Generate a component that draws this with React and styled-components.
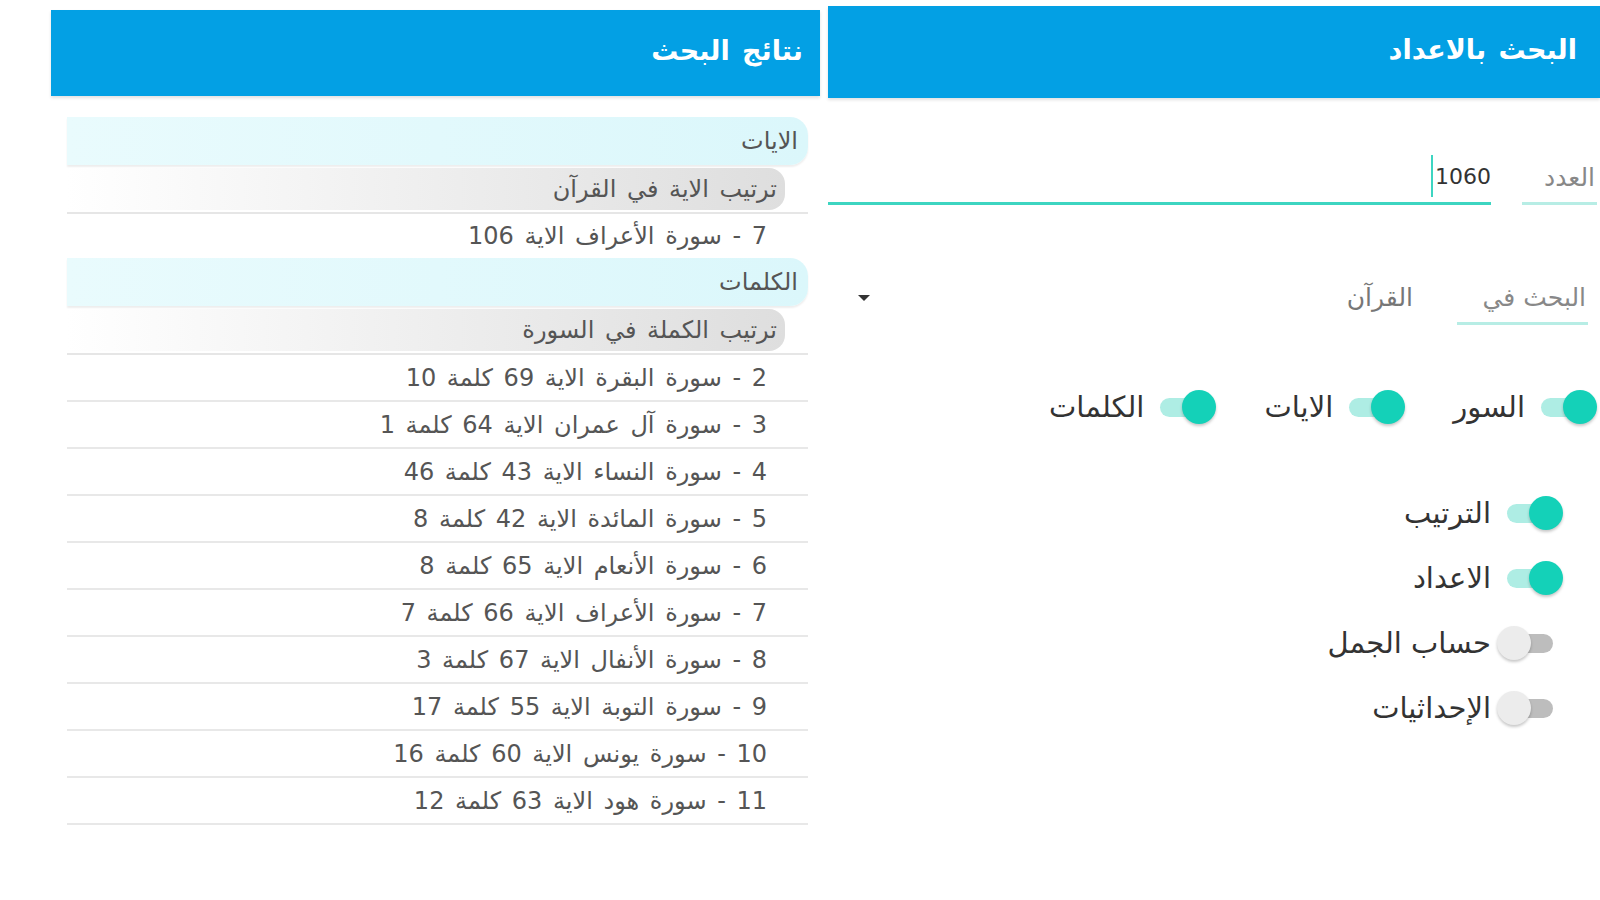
import React from 'react';
import styled, { createGlobalStyle } from 'styled-components';

const GlobalStyle = createGlobalStyle`
  html, body {
    margin: 0;
    padding: 0;
    background: #fff;
  }
  body {
    font-family: "DejaVu Sans", "Noto Sans", sans-serif;
  }
`;

const Page = styled.div`
  direction: rtl;
  display: flex;
  align-items: flex-start;
  gap: 8px;
  padding-left: 51px;
  height: 900px;
  overflow: hidden;
`;

const Panel = styled.section`
  width: ${p => p.$width}px;
  display: flex;
  flex-direction: column;
`;

const Header = styled.header`
  height: ${p => p.$height}px;
  margin-top: ${p => p.$top}px;
  padding-right: ${p => p.$pad}px;
  padding-bottom: 6px;
  box-sizing: border-box;
  background: #03a0e4;
  color: #fff;
  display: flex;
  align-items: center;
  font-size: 27px;
  font-weight: bold;
  word-spacing: 3px;
  box-shadow: 0 2px 3px rgba(0, 0, 0, 0.12);
`;

/* ---------- results list ---------- */

const ResultList = styled.div`
  padding: 21px 12px 0 16px;
  display: flex;
  flex-direction: column;
  font-size: 24px;
  word-spacing: 3px;
  color: #555;
`;

const SectionBand = styled.div`
  height: 48px;
  display: flex;
  align-items: center;
  padding-right: 10px;
  background: linear-gradient(to right, #e9fbfd, #dbf7fb);
  border-radius: 0 18px 18px 0;
  box-shadow: 0 2px 2px rgba(0, 0, 0, 0.07);
`;

const SortRow = styled.div`
  margin-top: 3px;
  padding-bottom: 2px;
  border-bottom: 2px solid #e6e6e6;
`;

const SortBand = styled.div`
  height: 42px;
  margin-right: 23px;
  display: flex;
  align-items: center;
  padding-right: 8px;
  background: linear-gradient(to right, #ffffff, #dedede);
  border-radius: 0 16px 16px 0;
`;

const ResultItem = styled.div`
  height: ${p => (p.$plain ? 44 : 45)}px;
  display: flex;
  align-items: center;
  padding-right: 41px;
  border-bottom: ${p => (p.$plain ? 'none' : '2px solid #e8e8e8')};
`;

/* ---------- search form ---------- */

const FieldRow = styled.div`
  display: flex;
  align-items: flex-end;
  gap: ${p => p.$gap}px;
  height: ${p => p.$height}px;
  margin-top: ${p => p.$top}px;
  padding-right: ${p => p.$right}px;
  padding-left: ${p => p.$left || 0}px;
`;

const FieldLabel = styled.div`
  min-width: ${p => p.$min}px;
  box-sizing: border-box;
  font-size: 25px;
  line-height: 30px;
  color: #888;
  padding: 0 2px 9px;
  border-bottom: 3px solid #b7ede5;
  white-space: nowrap;
`;

const InputBox = styled.div`
  flex: 1;
  height: 52px;
  display: flex;
  align-items: center;
  border-bottom: 3px solid #3dd5c1;
  font-size: 22px;
  color: #333;
`;

const Caret = styled.span`
  width: 2px;
  height: 42px;
  margin-right: 2px;
  background: #3dd5c1;
`;

const Spinner = styled.div`
  flex: 1;
  display: flex;
  align-items: center;
  justify-content: space-between;
  padding-bottom: 12px;
  font-size: 25px;
  line-height: 30px;
  color: #777;
`;

const Arrow = styled.span`
  width: 0;
  height: 0;
  border-left: 6px solid transparent;
  border-right: 6px solid transparent;
  border-top: 6px solid #333;
`;

const ToggleLine = styled.div`
  display: flex;
  gap: 48px;
  margin-top: 65px;
  padding-right: 3px;
`;

const ToggleStack = styled.div`
  display: flex;
  flex-direction: column;
  gap: 31px;
  margin-top: 72px;
  padding-right: 37px;
`;

const Toggle = styled.label`
  display: flex;
  align-items: center;
  gap: 6px;
  height: 34px;
  font-size: 29px;
  color: #333;
  white-space: nowrap;
`;

const SwitchBox = styled.span`
  position: relative;
  width: 66px;
  height: 34px;
  flex: none;
`;

const Track = styled.span`
  position: absolute;
  left: 10px;
  right: 10px;
  top: 8px;
  height: 19px;
  border-radius: 10px;
  background: ${p => (p.$on ? '#aeede4' : '#bdbdbd')};
`;

const Thumb = styled.span`
  position: absolute;
  top: 0;
  ${p => (p.$on ? 'right: 0;' : 'left: 0;')}
  width: 34px;
  height: 34px;
  border-radius: 50%;
  background: ${p => (p.$on ? '#14d1b8' : '#ececec')};
  box-shadow: 0 2px 3px rgba(0, 0, 0, 0.22);
`;

const Switch = ({ on }) => (
  <SwitchBox>
    <Track $on={on} />
    <Thumb $on={on} />
  </SwitchBox>
);

const wordResults = [
  '2 - سورة البقرة الاية 69 كلمة 10',
  '3 - سورة آل عمران الاية 64 كلمة 1',
  '4 - سورة النساء الاية 43 كلمة 46',
  '5 - سورة المائدة الاية 42 كلمة 8',
  '6 - سورة الأنعام الاية 65 كلمة 8',
  '7 - سورة الأعراف الاية 66 كلمة 7',
  '8 - سورة الأنفال الاية 67 كلمة 3',
  '9 - سورة التوبة الاية 55 كلمة 17',
  '10 - سورة يونس الاية 60 كلمة 16',
  '11 - سورة هود الاية 63 كلمة 12',
];

const scopes = [
  { label: 'السور', on: true },
  { label: 'الايات', on: true },
  { label: 'الكلمات', on: true },
];

const options = [
  { label: 'الترتيب', on: true },
  { label: 'الاعداد', on: true },
  { label: 'حساب الجمل', on: false },
  { label: 'الإحداثيات', on: false },
];

export default function App() {
  return (
    <>
      <GlobalStyle />
      <Page>
        <Panel $width={772}>
          <Header $height={92} $top={6} $pad={23}>البحث بالاعداد</Header>

          <FieldRow $gap={31} $height={55} $top={52} $right={3}>
            <FieldLabel $min={75}>العدد</FieldLabel>
            <InputBox>
              1060
              <Caret />
            </InputBox>
          </FieldRow>

          <FieldRow $gap={44} $height={58} $top={62} $right={12} $left={30}>
            <FieldLabel $min={131}>البحث في</FieldLabel>
            <Spinner>
              القرآن
              <Arrow />
            </Spinner>
          </FieldRow>

          <ToggleLine>
            {scopes.map(s => (
              <Toggle key={s.label}>
                <Switch on={s.on} />
                {s.label}
              </Toggle>
            ))}
          </ToggleLine>

          <ToggleStack>
            {options.map(o => (
              <Toggle key={o.label}>
                <Switch on={o.on} />
                {o.label}
              </Toggle>
            ))}
          </ToggleStack>
        </Panel>

        <Panel $width={769}>
          <Header $height={86} $top={10} $pad={17}>نتائج البحث</Header>
          <ResultList>
            <SectionBand>الايات</SectionBand>
            <SortRow>
              <SortBand>ترتيب الاية في القرآن</SortBand>
            </SortRow>
            <ResultItem $plain>7 - سورة الأعراف الاية 106</ResultItem>

            <SectionBand>الكلمات</SectionBand>
            <SortRow>
              <SortBand>ترتيب الكملة في السورة</SortBand>
            </SortRow>
            {wordResults.map(r => (
              <ResultItem key={r}>{r}</ResultItem>
            ))}
          </ResultList>
        </Panel>
      </Page>
    </>
  );
}
